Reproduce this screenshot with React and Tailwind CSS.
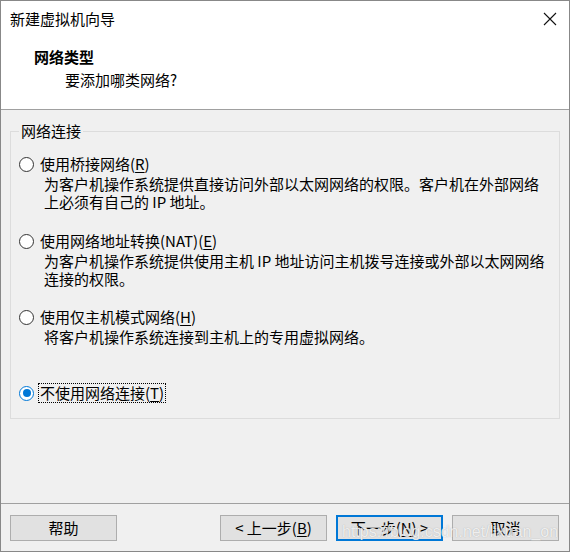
import React from "react";

const FONT = { fontFamily: '"Microsoft YaHei UI", "Noto Sans CJK SC", "Noto Sans", sans-serif' };

function U({ children }) {
  return <span className="underline underline-offset-2 decoration-1">{children}</span>;
}

function Radio({ checked }) {
  return (
    <span
      className={
        "flex items-center justify-center w-[15px] h-[15px] rounded-full bg-white border shrink-0 " +
        (checked ? "border-[#0078d7]" : "border-[#333333]")
      }
    >
      {checked && <span className="w-[8px] h-[8px] rounded-full bg-[#0078d7]" />}
    </span>
  );
}

function Option({ checked, label, lines, h }) {
  return (
    <div className={"flex flex-col " + h}>
      <div className="flex items-center h-[20px] pl-[8px] gap-[4px]">
        <Radio checked={checked} />
        <span
          className={
            "px-[1px] leading-[18px] border " +
            (checked ? "border-dotted border-black" : "border-transparent")
          }
        >
          {label}
        </span>
      </div>
      <div className="pl-[33px] pt-[1px]">
        {lines.map((l, i) => (
          <div key={i} className="leading-[18px] whitespace-nowrap">
            {l}
          </div>
        ))}
      </div>
    </div>
  );
}

function Btn({ children, primary }) {
  return (
    <button
      className={
        "w-[107px] h-[26px] flex items-center justify-center bg-[#e1e1e1] text-[15px] text-black " +
        (primary ? "border-2 border-[#0078d7]" : "border border-[#adadad]")
      }
    >
      {children}
    </button>
  );
}

export default function App() {
  return (
    <div
      style={FONT}
      className="relative w-[570px] h-[552px] border border-[#888888] bg-[#f0f0f0] flex flex-col text-[15px] text-black overflow-hidden"
    >
      {/* header */}
      <div className="bg-white h-[108px] flex flex-col shrink-0">
        <div className="flex items-center justify-between h-[35px] pl-[9px] pr-[12px]">
          <span className="leading-[20px]">新建虚拟机向导</span>
          <svg width="14" height="14" viewBox="0 0 14 14">
            <path d="M1 1 L13 13 M13 1 L1 13" stroke="#111" strokeWidth="1.1" fill="none" />
          </svg>
        </div>
        <div className="pl-[33px] pt-[11px] font-bold leading-[20px]">网络类型</div>
        <div className="pl-[64px] pt-[3px] leading-[20px]">要添加哪类网络?</div>
      </div>
      <div className="h-px bg-[#a0a0a0] shrink-0" />

      {/* group box */}
      <div className="relative mx-[9px] mt-[21px] h-[288px] border border-[#dcdcdc] flex flex-col pt-[22px] shrink-0">
        <span className="absolute -top-[11px] left-[8px] px-[2px] bg-[#f0f0f0] leading-[20px]">网络连接</span>
        <Option
          h="h-[77px]"
          label={<>使用桥接网络(<U>R</U>)</>}
          lines={[
            "为客户机操作系统提供直接访问外部以太网网络的权限。客户机在外部网络",
            "上必须有自己的 IP 地址。",
          ]}
        />
        <Option
          h="h-[76px]"
          label={<>使用网络地址转换(NAT)(<U>E</U>)</>}
          lines={[
            "为客户机操作系统提供使用主机 IP 地址访问主机拨号连接或外部以太网网络",
            "连接的权限。",
          ]}
        />
        <Option
          h="h-[76px]"
          label={<>使用仅主机模式网络(<U>H</U>)</>}
          lines={["将客户机操作系统连接到主机上的专用虚拟网络。"]}
        />
        <Option h="h-[20px]" checked label={<>不使用网络连接(<U>T</U>)</>} lines={[]} />
      </div>

      <div className="flex-1" />

      {/* footer */}
      <div className="h-px bg-[#a0a0a0] shrink-0" />
      <div className="h-[47px] flex items-start pt-[11px] pl-[9px] pr-[10px] shrink-0">
        <Btn>帮助</Btn>
        <div className="flex-1" />
        <div className="flex gap-[9px]">
          <Btn>&lt; 上一步(<U>B</U>)</Btn>
          <Btn primary>下一步(<U>N</U>) &gt;</Btn>
          <Btn>取消</Btn>
        </div>
      </div>

      {/* watermark */}
      <div
        className="absolute left-[341px] top-[519px] text-[16px] text-white/80 whitespace-nowrap pointer-events-none"
        style={{ fontFamily: '"Liberation Sans", Arial, sans-serif', textShadow: "0 0 1px rgba(120,120,120,0.6)" }}
      >
        https://blog.csdn.net/lixuan_on
      </div>
    </div>
  );
}
